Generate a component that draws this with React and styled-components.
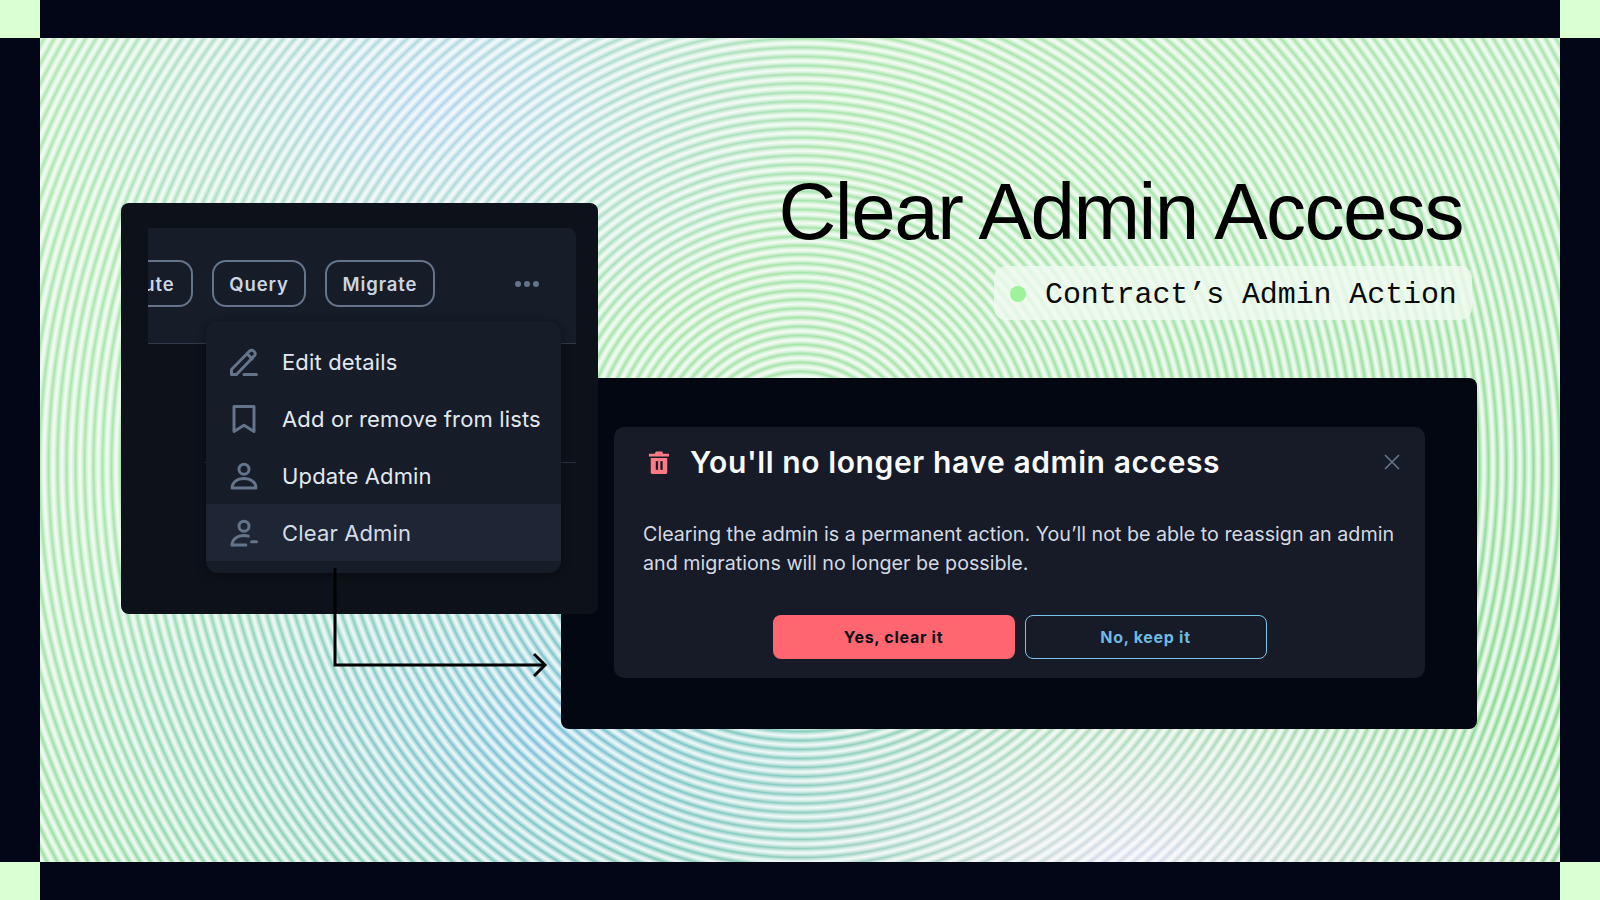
import React from "react";
import styled, { createGlobalStyle } from "styled-components";

const GlobalStyle = createGlobalStyle`
  html, body { margin: 0; padding: 0; background: #020617; }
  * { box-sizing: border-box; }
`;

const Frame = styled.div`
  width: 1600px;
  height: 900px;
  overflow: hidden;
  display: grid;
  grid-template-columns: 40px 1fr 40px;
  grid-template-rows: 38px 1fr 38px;
  background: #020617;
`;

const Corner = styled.div`
  background: ${(p) => (p.$on ? "#d9ffd2" : "transparent")};
`;

const Stage = styled.div`
  position: relative;
  display: flex;
  flex-direction: column;
  align-items: flex-end;
  padding: 134px 88px 0 0;
  background:
    repeating-radial-gradient(circle at 760px 428px,
      rgba(255, 255, 255, 0.9) 0px,
      rgba(255, 255, 255, 0.6) 2.25px,
      rgba(255, 255, 255, 0.12) 4.5px,
      rgba(255, 255, 255, 0.6) 6.75px,
      rgba(255, 255, 255, 0.9) 9px),
    radial-gradient(ellipse 400px 260px at 26% 8%, #a6cdec 0%, rgba(166, 205, 236, 0) 100%),
    radial-gradient(ellipse 520px 340px at 33% 84%, #62b4d4 0%, rgba(98, 180, 212, 0) 100%),
    radial-gradient(ellipse 480px 220px at 72% 100%, #d6d6ea 0%, rgba(214, 214, 234, 0) 100%),
    linear-gradient(160deg, #a2e4a4 0%, #98e09e 45%, #6ed078 100%);
`;

const Heading = styled.h1`
  margin: 0 9px 0 0;
  font-family: "Liberation Sans", Arial, sans-serif;
  font-weight: 400;
  font-size: 80px;
  line-height: 80px;
  letter-spacing: -1.5px;
  color: #000;
`;

const Tag = styled.div`
  margin-top: 14px;
  height: 54px;
  width: 478px;
  display: flex;
  align-items: center;
  gap: 19px;
  padding-left: 16px;
  border-radius: 12px;
  background: rgba(240, 250, 240, 0.8);
  font-family: "Liberation Mono", monospace;
  font-size: 30px;
  letter-spacing: -0.1px;
  color: #0a0a0a;
`;

const TagText = styled.span`
  margin-top: 3px;
`;

const Dot = styled.span`
  width: 16px;
  height: 16px;
  margin-top: 1px;
  border-radius: 50%;
  background: #9ef29a;
`;

const LeftWindow = styled.section`
  position: absolute;
  left: 81px;
  top: 165px;
  width: 477px;
  height: 411px;
  padding: 25px 22px 0 27px;
  border-radius: 8px;
  background: #0d1119;
  z-index: 2;
`;

const Tabs = styled.div`
  height: 116px;
  display: flex;
  align-items: center;
  gap: 19px;
  overflow: hidden;
  padding: 0 36px 4px 0;
  border-top-right-radius: 8px;
  border-bottom: 1.5px solid #2f3a4c;
  background: #161c28;
`;

const Chip = styled.div`
  flex-shrink: 0;
  height: 47px;
  width: ${(p) => p.$w}px;
  margin-left: ${(p) => p.$shift || 0}px;
  display: flex;
  align-items: center;
  justify-content: center;
  border: 2px solid #64748b;
  border-radius: 14px;
  font-family: "Inter", sans-serif;
  font-weight: 600;
  font-size: 18.5px;
  letter-spacing: 0.9px;
  color: #cbd5e1;
`;

const More = styled.svg`
  margin-left: auto;
  flex-shrink: 0;
`;

const Divider = styled.div`
  height: 1px;
  margin: 118px 0 0 56px;
  background: #262f3d;
`;

const Menu = styled.div`
  position: absolute;
  left: 85px;
  top: 118px;
  width: 355px;
  padding: 12px 0;
  border-radius: 12px;
  background: #161c28;
  box-shadow: 0 2px 10px rgba(0, 0, 0, 0.35);
`;

const MenuRow = styled.div`
  height: 57px;
  display: flex;
  align-items: center;
  gap: 23px;
  padding-left: 23px;
  background: ${(p) => (p.$active ? "#1e2636" : "transparent")};
  font-family: "Inter", sans-serif;
  font-size: 22px;
  letter-spacing: 0.15px;
  color: ${(p) => (p.$active ? "#d5dce6" : "#e2e8f0")};
`;

const RightWindow = styled.section`
  position: absolute;
  left: 521px;
  top: 340px;
  width: 916px;
  height: 351px;
  padding: 49px 52px 0 53px;
  border-radius: 8px;
  background: #030712;
  z-index: 1;
`;

const Dialog = styled.div`
  height: 251px;
  padding: 15px 29px 19px;
  border-radius: 10px;
  background: #161b27;
`;

const DialogHead = styled.div`
  height: 40px;
  display: flex;
  align-items: center;
  padding-left: 5px;
`;

const DialogTitle = styled.h2`
  margin: 0 0 0 20px;
  font-family: "Inter", sans-serif;
  font-weight: 600;
  font-size: 30px;
  letter-spacing: 0.6px;
  color: #f8fafc;
`;

const Close = styled.svg`
  margin: 0 -4px 0 auto;
`;

const Body = styled.p`
  margin: 38px 0 0;
  font-family: "Inter", sans-serif;
  font-size: 19.7px;
  line-height: 29px;
  white-space: nowrap;
  color: #d3d9e3;
`;

const Actions = styled.div`
  margin-top: 37px;
  display: flex;
  justify-content: center;
  gap: 10px;
`;

const Button = styled.button`
  width: 242px;
  height: 44px;
  border-radius: 8px;
  border: ${(p) => (p.$danger ? "none" : "1.5px solid #79c4ec")};
  background: ${(p) => (p.$danger ? "#ff6670" : "transparent")};
  color: ${(p) => (p.$danger ? "#0b0f17" : "#6fb9e3")};
  font-family: "Inter", sans-serif;
  font-weight: 700;
  font-size: 16px;
  letter-spacing: 0.7px;
`;

const Arrow = styled.svg`
  position: absolute;
  left: 290px;
  top: 528px;
  z-index: 3;
`;

const iconProps = {
  width: 30,
  height: 30,
  viewBox: "0 0 24 24",
  fill: "none",
  stroke: "#64748b",
  strokeWidth: 2.4,
  strokeLinecap: "round",
  strokeLinejoin: "round",
};

const PencilIcon = () => (
  <svg {...iconProps}>
    <path d="M2 22v-4L16.500 3.200a2.200 2.200 0 0 1 3.200 0l.6.6a2.200 2.200 0 0 1 0 3.200L6 22H2z" />
    <path d="M14.500 5.500l4 4" />
    <path d="M12 22h10" />
  </svg>
);

const BookmarkIcon = () => (
  <svg {...iconProps}>
    <path d="M4 2h16v20l-8-5-8 5V2z" />
  </svg>
);

const UserIcon = () => (
  <svg {...iconProps}>
    <circle cx="12" cy="6.500" r="4" />
    <path d="M2.500 21.500c0-4.500 4-7.500 9.500-7.500s9.500 3 9.500 7.500z" />
  </svg>
);

const UserMinusIcon = () => (
  <svg {...iconProps}>
    <circle cx="12" cy="6.500" r="4" />
    <path d="M2.500 21.500c0-4.500 4-7.500 9.500-7.500 1.500 0 2.500.2 3.500.5" />
    <path d="M2.500 21.500h11" />
    <path d="M18 19h4" />
  </svg>
);

const TrashIcon = () => (
  <svg width="22" height="25" viewBox="0 0 24 26">
    <path
      fill="#ff7a85"
      d="M8.500 1h7l1 2.500H23v3H1v-3h6.500L8.500 1zM3 8h18v16a1.500 1.500 0 0 1-1.500 1.500h-15A1.500 1.500 0 0 1 3 24V8z"
    />
    <rect x="8.500" y="11.500" width="2.500" height="9.500" fill="#161b27" />
    <rect x="13.500" y="11.500" width="2.500" height="9.500" fill="#161b27" />
  </svg>
);

const menuItems = [
  { label: "Edit details", Icon: PencilIcon },
  { label: "Add or remove from lists", Icon: BookmarkIcon },
  { label: "Update Admin", Icon: UserIcon },
  { label: "Clear Admin", Icon: UserMinusIcon, active: true },
];

export default function App() {
  return (
    <Frame>
      <GlobalStyle />
      <Corner $on />
      <Corner />
      <Corner $on />
      <Corner />
      <Stage>
        <Heading>Clear Admin Access</Heading>
        <Tag>
          <Dot />
          <TagText>Contract’s Admin Action</TagText>
        </Tag>

        <LeftWindow>
          <Tabs>
            <Chip $w={115} $shift={-70}>Execute</Chip>
            <Chip $w={94}>Query</Chip>
            <Chip $w={110}>Migrate</Chip>
            <More width="26" height="8" viewBox="0 0 26 8">
              <circle cx="4" cy="4" r="3" fill="#64748b" />
              <circle cx="13" cy="4" r="3" fill="#64748b" />
              <circle cx="22" cy="4" r="3" fill="#64748b" />
            </More>
          </Tabs>
          <Divider />
          <Menu>
            {menuItems.map(({ label, Icon, active }) => (
              <MenuRow key={label} $active={active}>
                <Icon />
                {label}
              </MenuRow>
            ))}
          </Menu>
        </LeftWindow>

        <RightWindow>
          <Dialog>
            <DialogHead>
              <TrashIcon />
              <DialogTitle>You'll no longer have admin access</DialogTitle>
              <Close width="16" height="16" viewBox="0 0 16 16">
                <path d="M1 1l14 14M15 1L1 15" stroke="#64748b" strokeWidth="1.6" />
              </Close>
            </DialogHead>
            <Body>
              Clearing the admin is a permanent action. You’ll not be able to reassign an admin
              <br />
              and migrations will no longer be possible.
            </Body>
            <Actions>
              <Button $danger>Yes, clear it</Button>
              <Button>No, keep it</Button>
            </Actions>
          </Dialog>
        </RightWindow>

        <Arrow width="222" height="120" viewBox="0 0 222 120" fill="none">
          <path d="M5 2v97h210" stroke="#000" strokeWidth="3" />
          <path d="M204 88l11 11-11 11" stroke="#000" strokeWidth="3" />
        </Arrow>
      </Stage>
      <Corner />
      <Corner $on />
      <Corner />
      <Corner $on />
    </Frame>
  );
}
